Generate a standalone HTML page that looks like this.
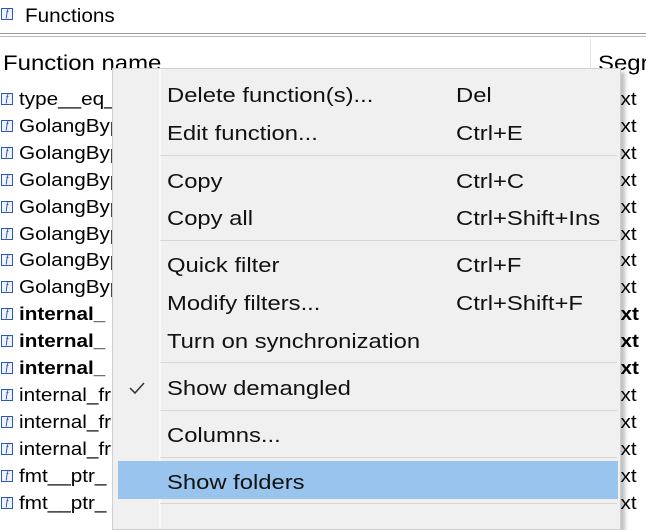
<!DOCTYPE html>
<html><head><meta charset="utf-8"><style>
body{margin:0;width:646px;height:518px;overflow:hidden;background:#fff;font-family:"Liberation Sans",sans-serif;position:relative}
.a{position:absolute;white-space:nowrap;transform-origin:0 0}
.ic{position:absolute;left:1px;width:10px;height:10px;border:1px solid #2a5bb8;background:#eef3ff;font:italic 10px "Liberation Serif",serif;color:#123a9a;line-height:10px;text-align:center}
.r{font-size:18px;color:#000;transform:scaleX(1.15)}
.m{font-size:20px;color:#111;transform:scaleX(1.19);margin-top:2px}
.sep{position:absolute;left:160px;width:457px;height:1px;background:#d7d7d7}
</style></head><body>
<div class="ic" style="top:8px">f</div>
<div class="a" style="left:25px;top:6px;font-size:19px;transform:scaleX(1.09)">Functions</div>
<div class="a" style="left:0;top:33px;width:646px;height:1px;background:#999"></div>
<div class="a" style="left:0;top:36px;width:646px;height:1px;background:#bbb"></div>
<div class="a" style="left:3px;top:52px;font-size:21px;transform:scaleX(1.14)">Function name</div>
<div class="a" style="left:590px;top:38px;width:1px;height:480px;background:#e5e5e5"></div>
<div class="a" style="left:598px;top:52px;font-size:21px;transform:scaleX(1.14)">Segr</div>
<div id="rows"></div>
<script>
var t=["type__eq_","GolangByp","GolangByp","GolangByp","GolangByp","GolangByp","GolangByp","GolangByp","internal_","internal_","internal_","internal_fr","internal_fr","internal_fr","fmt__ptr_","fmt__ptr_"];
var h="";for(var i=0;i<t.length;i++){var y=100+i*26.9;var b=(i>=8&&i<=10);
h+='<div class="ic" style="top:'+(y-7)+'px">f</div><div class="a r" style="left:19px;top:'+(y-11)+'px;'+(b?'font-weight:bold':'')+'">'+t[i]+'</div><div class="a r" style="left:609px;top:'+(y-11)+'px;'+(b?'font-weight:bold':'')+'">ext</div>';}
document.getElementById('rows').innerHTML=h;
</script>
<div class="a" style="left:112px;top:68px;width:507px;height:460px;background:#f0f0f0;border:1px solid #cfcfcf;box-shadow:4px 4px 4px rgba(0,0,0,.25)"></div>
<div class="a" style="left:159px;top:69px;width:2px;height:460px;background:#fafafa"></div>
<div class="a m" style="left:167px;top:83px">Delete function(s)...</div><div class="a m" style="left:456px;top:83px">Del</div>
<div class="a m" style="left:167px;top:121px">Edit function...</div><div class="a m" style="left:456px;top:121px">Ctrl+E</div>
<div class="sep" style="top:155px"></div>
<div class="a m" style="left:167px;top:169px">Copy</div><div class="a m" style="left:456px;top:169px">Ctrl+C</div>
<div class="a m" style="left:167px;top:206px">Copy all</div><div class="a m" style="left:456px;top:206px">Ctrl+Shift+Ins</div>
<div class="sep" style="top:240px"></div>
<div class="a m" style="left:167px;top:253px">Quick filter</div><div class="a m" style="left:456px;top:253px">Ctrl+F</div>
<div class="a m" style="left:167px;top:291px">Modify filters...</div><div class="a m" style="left:456px;top:291px">Ctrl+Shift+F</div>
<div class="a m" style="left:167px;top:329px">Turn on synchronization</div>
<div class="sep" style="top:362px"></div>
<svg class="a" style="left:128px;top:381px" width="18" height="14"><path d="M2 7 L7 12 L16 2" fill="none" stroke="#333" stroke-width="1.5"/></svg>
<div class="a m" style="left:167px;top:376px">Show demangled</div>
<div class="sep" style="top:410px"></div>
<div class="a m" style="left:167px;top:423px">Columns...</div>
<div class="sep" style="top:457px"></div>
<div class="a" style="left:118px;top:461px;width:500px;height:38px;background:#99c4ee"></div>
<div class="a m" style="left:167px;top:470px">Show folders</div>
<div class="sep" style="top:503px"></div>
</body></html>
